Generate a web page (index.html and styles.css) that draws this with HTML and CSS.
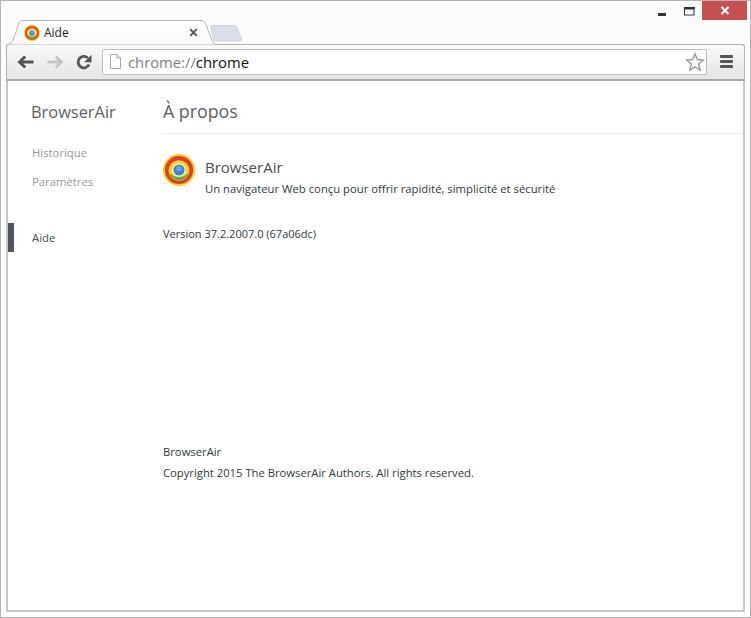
FILE: index.html
```html
<!DOCTYPE html>
<html lang="fr">
<head>
<meta charset="utf-8">
<title>Aide</title>
<link rel="stylesheet" href="styles.css">
</head>
<body>
<div class="window">
  <div class="caption">
    <div class="btn-min"><svg class="block" width="8" height="3"><rect x="0" y="0" width="8" height="3" fill="#2b3440"/></svg></div>
    <div class="btn-max"><svg class="block" width="11" height="9"><rect x=".5" y=".5" width="9.5" height="7.5" fill="#fff" stroke="#2b3440"/><rect x="0" y="0" width="11" height="2.5" fill="#2b3440"/></svg></div>
    <div class="btn-close"><svg width="10" height="9" viewBox="0 0 10 9"><path d="M1.5 1 L8.5 8 M8.5 1 L1.5 8" stroke="#fff" stroke-width="2"/></svg></div>
  </div>
  <div class="tabstrip">
    <div class="tab">
      <svg class="tab-bg" width="224" height="25" viewBox="0 0 224 25">
        <defs><linearGradient id="tg" x1="0" y1="0" x2="0" y2="1"><stop offset="0" stop-color="#fff"/><stop offset="1" stop-color="#fafafa"/></linearGradient></defs>
        <path d="M0.5 24.5 C5 24 6.5 22 7.5 19 L13 3 C13.5 1.2 15 0.5 17 0.5 H195 C197.5 .5 198.5 1.5 199.5 3.5 L206 20 C207 23 208.5 24.5 211 24.5" fill="url(#tg)" stroke="#b4b4b4"/>
      </svg>
      <svg class="favicon" width="16" height="16" viewBox="0 0 30 30"><use href="#logo"/></svg>
      <span class="tab-title">Aide</span>
      <svg class="tab-x" width="9" height="9" viewBox="0 0 9 9"><path d="M1.2 1.2 L7.8 7.8 M7.8 1.2 L1.2 7.8" stroke="#555" stroke-width="1.9"/></svg>
    </div>
    <svg class="newtab" width="33" height="17" viewBox="0 0 33 17"><path d="M.6 2.5 C.4 1 1 .5 2.5 .5 H24 C25.5 .5 26 1 26.7 2.2 L31.6 13.5 C32.2 15.2 31.6 16 30 16 H6 C4.6 16 4 15.5 3.6 14 Z" fill="#d9dfe8" stroke="#cdd2da"/></svg>
  </div>
  <div class="toolbar">
    <svg class="nav" width="18" height="16" viewBox="0 0 18 16"><path d="M8.2 2.5 L2.6 8 L8.2 13.5 M3 8 H16.5" fill="none" stroke="#555" stroke-width="3"/></svg>
    <svg class="nav" width="18" height="16" viewBox="0 0 18 16"><path d="M9.8 2.5 L15.4 8 L9.8 13.5 M15 8 H1.5" fill="none" stroke="#c4c4c4" stroke-width="3"/></svg>
    <svg class="nav reload" width="16" height="16" viewBox="0 0 16 16"><path d="M13 10.5 A5.7 5.7 0 1 1 11.8 4" fill="none" stroke="#555" stroke-width="2.8"/><path d="M15.5 0.8 V8.2 H8.2 Z" fill="#555"/></svg>
    <div class="omnibox">
      <svg class="page-icon" width="11" height="15" viewBox="0 0 11 15"><path d="M.5.5 H7 L10.5 4 V14.5 H.5 Z" fill="#fff" stroke="#a9a9a9"/><path d="M7 .5 V4 H10.5" fill="#e8e8e8" stroke="#a9a9a9"/></svg>
      <span class="url"><span class="scheme">chrome://</span>chrome</span>
      <svg class="star" width="20" height="20" viewBox="0 0 20 20"><path d="M10 1.8 L12.3 7.5 L18.4 8 L13.7 12 L15.2 18 L10 14.8 L4.8 18 L6.3 12 L1.6 8 L7.7 7.5 Z" fill="#fff" stroke="#999" stroke-width="1.4"/></svg>
    </div>
    <div class="menu"><i></i><i></i><i></i></div>
  </div>
  <div class="content">
    <nav class="sidebar">
      <h1 class="brand">BrowserAir</h1>
      <a class="nav-link">Historique</a>
      <a class="nav-link">Paramètres</a>
      <a class="nav-link active">Aide</a>
    </nav>
    <main class="main">
      <h2 class="page-title">À propos</h2>
      <div class="product">
        <svg class="logo" width="32" height="32" viewBox="0 0 30 30">
          <symbol id="logo" viewBox="0 0 30 30">
            <circle cx="15" cy="15" r="15" fill="#f2d31b"/>
            <circle cx="15" cy="15" r="13.2" fill="#e5392c"/>
            <circle cx="15" cy="15.6" r="9.8" fill="#f4d620"/>
            <path d="M5.4 17 A9.8 9.8 0 0 0 24.6 17 C20 23 10 23 5.4 17 Z" fill="#68ab45"/>
            <circle cx="15" cy="15" r="6.2" fill="#f8f8f4"/>
            <circle cx="15" cy="15" r="5.2" fill="#3f82cc"/>
            <circle cx="15" cy="13.5" r="2.6" fill="#6fa5dd"/>
          </symbol>
          <use href="#logo"/>
        </svg>
        <div class="product-text">
          <div class="product-name">BrowserAir</div>
          <div class="product-desc">Un navigateur Web conçu pour offrir rapidité, simplicité et sécurité</div>
        </div>
      </div>
      <p class="version">Version 37.2.2007.0 (67a06dc)</p>
      <p class="footer-name">BrowserAir</p>
      <p class="copyright">Copyright 2015 The BrowserAir Authors. All rights reserved.</p>
    </main>
  </div>
</div>
</body>
</html>
```
FILE: styles.css
```css
* { box-sizing: border-box; }
html, body { margin: 0; padding: 0; }
body {
  width: 751px;
  height: 618px;
  overflow: hidden;
  font-family: "Open Sans", "Noto Sans", sans-serif;
  color: #303942;
  background: #fcfcfc;
}
.window {
  width: 751px;
  height: 618px;
  border: 1px solid #b4b4b4;
  padding: 0 3px 5px 5px;
  background: #fcfcfc;
  display: flex;
  flex-direction: column;
  overflow: hidden;
}
.caption {
  height: 19px;
  display: flex;
  justify-content: flex-end;
  align-items: stretch;
  flex: none;
}
.block { display: block; }
.btn-min { width: 26px; padding-top: 12px; }
.btn-max { width: 11px; padding-top: 6px; margin-right: 7px; }
.btn-close {
  width: 45px;
  background: #c75050;
  display: flex;
  align-items: center;
  justify-content: center;
}
.tabstrip {
  height: 24px;
  flex: none;
  display: flex;
  position: relative;
}
.tab {
  width: 205px;
  height: 25px;
  position: relative;
  display: flex;
  align-items: center;
  padding: 0 13px 0 18px;
  z-index: 2;
}
.tab-bg { position: absolute; left: 0; top: 0; }
.favicon, .tab-title, .tab-x { position: relative; }
.tab-title {
  margin-left: 4px;
  font-size: 12px;
  color: #222;
  flex: 1;
}
.newtab { margin: 5px 0 0 -1px; }
.toolbar {
  height: 37px;
  flex: none;
  margin-right: 2px;
  border: 1px solid #b4b4b4;
  border-bottom: 2px solid #a8a8a8;
  border-radius: 3px 3px 0 0;
  background: linear-gradient(#fafafa, #e4e4e4);
  display: flex;
  align-items: center;
  padding: 0 0 1px 10px;
}
.nav { flex: none; margin-right: 11px; }
.nav.reload { margin-left: 1px; margin-right: 10px; }
.omnibox {
  width: 605px;
  height: 26px;
  flex: none;
  background: #fff;
  border: 1px solid #bdbdbd;
  border-radius: 2px;
  display: flex;
  align-items: center;
  padding: 0 1px 0 7px;
}
.page-icon { flex: none; }
.url {
  flex: 1;
  margin-left: 7px;
  font-size: 14.8px;
  color: #111;
  white-space: nowrap;
}
.scheme { color: #7b8087; }
.star { flex: none; }
.menu {
  margin-left: 13px;
  width: 13px;
  display: flex;
  flex-direction: column;
  gap: 2px;
}
.menu i {
  display: block;
  height: 3px;
  background: #555;
  border-radius: 1px;
}
.content {
  flex: 1;
  min-height: 0;
  margin-right: 2px;
  background: #fff;
  border-left: 2px solid #c8c8c8;
  border-bottom: 2px solid #c8c8c8;
  border-right: 2px solid #c8c8c8;
  display: flex;
}
.sidebar {
  width: 155px;
  flex: none;
  display: flex;
  flex-direction: column;
  padding-top: 19px;
}
.brand {
  margin: 0 0 22px;
  padding-left: 23px;
  font-size: 16.4px;
  font-weight: 400;
  line-height: 23px;
  color: #5c6166;
}
.nav-link {
  display: block;
  padding-left: 24px;
  font-size: 11.3px;
  line-height: 15px;
  color: #999;
  margin-bottom: 14px;
}
.nav-link.active {
  margin-top: 20px;
  height: 29px;
  line-height: 29px;
  color: #464e5a;
  border-left: 6px solid #4e5561;
  padding-left: 18px;
}
.main {
  flex: 1;
  min-width: 0;
}
.page-title {
  margin: 0;
  height: 53px;
  padding-top: 18px;
  font-size: 17.8px;
  line-height: 24px;
  font-weight: 400;
  color: #5c6166;
  border-bottom: 1px solid #eee;
}
.product {
  display: flex;
  align-items: flex-start;
  margin-top: 20px;
  gap: 10px;
}
.logo { flex: none; }
.product-name {
  font-size: 15px;
  line-height: 20px;
  color: #4a4f55;
  margin-top: 3px;
}
.product-desc {
  font-size: 11.3px;
  line-height: 16px;
  margin-top: 4px;
}
.version {
  margin: 29px 0 0;
  font-size: 11px;
  line-height: 16px;
}
.footer-name {
  margin: 202px 0 0;
  font-size: 11.25px;
  line-height: 16px;
}
.copyright {
  margin: 5px 0 0;
  font-size: 11.25px;
  line-height: 16px;
}
```
